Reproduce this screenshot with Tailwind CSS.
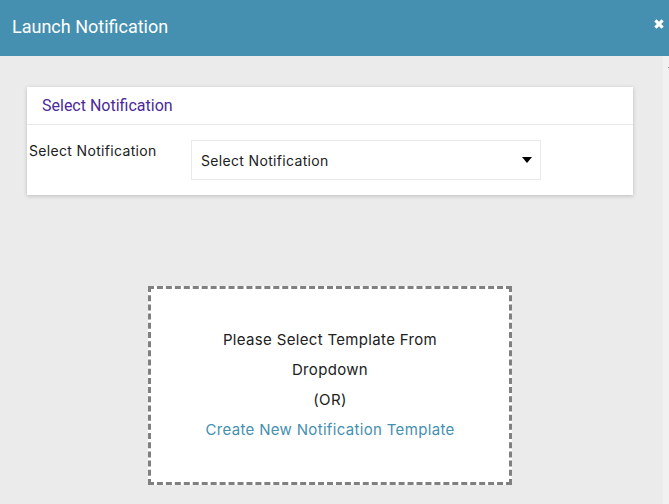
<html lang="en">
<head>
  <meta charset="UTF-8">
  <title>Launch Notification</title>
  <script src="https://cdn.jsdelivr.net/npm/@tailwindcss/browser@4"></script>
</head>
<body class="w-[669px] h-[504px] overflow-hidden bg-[#ebebeb] font-['Inter',sans-serif] text-[#212121]">
  <div class="h-14 bg-[#458fb0] flex items-center justify-between pl-3 pr-[5px]">
    <h1 class="font-['Roboto',sans-serif] text-lg leading-none text-white mt-[-2px]">Launch Notification</h1>
    <svg class="w-[10px] h-[10px] mt-[-8px]" viewBox="0 0 10 10"><path d="M1.4 1.4 8.6 8.6M8.6 1.4 1.4 8.6" stroke="#fff" stroke-width="3.2"/></svg>
  </div>
  <div class="flex h-[448px]">
    <div class="w-[663px]">
      <div class="ml-[27px] mt-[31px] w-[606px] h-[108px] bg-white shadow-[0_1px_4px_rgba(0,0,0,0.2)]">
        <div class="h-[38px] border-b border-[#eaeaea] pl-[15px] pt-[10px] font-['Roboto',sans-serif] text-[16px] leading-[18px] text-[#4b2a97]">Select Notification</div>
        <div class="flex">
          <div class="w-[164px] pl-[2px] pt-[17px] text-[14px] leading-[18px] tracking-[0.33px]">Select Notification</div>
          <div class="mt-[15px] w-[350px] h-10 border border-[#eaeaea] flex items-center justify-between pl-[9px] pr-[8px] text-[14px] tracking-[0.33px]">
            <span>Select Notification</span>
            <span class="mt-[-1px] w-0 h-0 border-x-[5px] border-x-transparent border-t-[6px] border-t-black"></span>
          </div>
        </div>
      </div>
      <div class="ml-[148px] mt-[91px] w-[364px] h-[199px] bg-white border-[3px] border-dashed border-[#808080] flex flex-col items-center pt-[36px] text-[15px] leading-[30px] tracking-[0.33px]">
        <p>Please Select Template From</p>
        <p>Dropdown</p>
        <p>(OR)</p>
        <a class="text-[#458fb0]">Create New Notification Template</a>
      </div>
    </div>
    <div class="w-[6px] bg-[#f1f1f1] flex justify-end items-start pt-[11px]">
      <span class="w-[1px] h-[1px] bg-[#8a8a8a]"></span>
    </div>
  </div>
</body>
</html>
